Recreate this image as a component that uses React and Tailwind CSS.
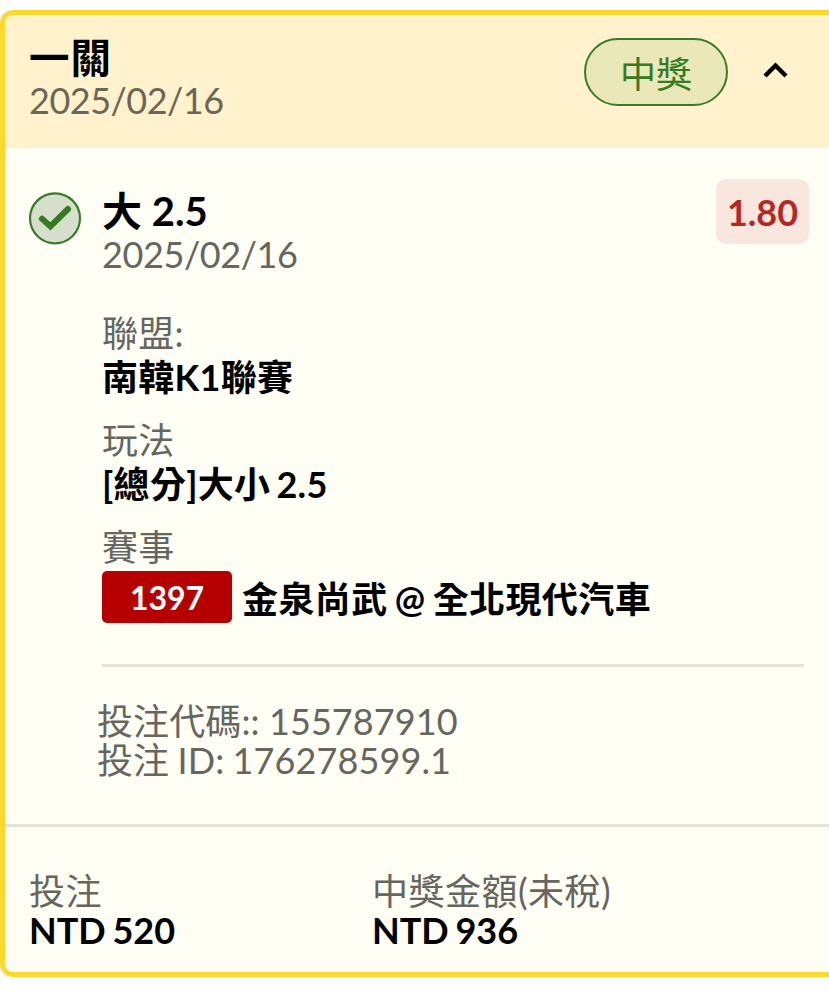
import { useState } from 'react';

const BET = {
  title: '一關',
  date: '2025/02/16',
  status: '中獎',
  code: '155787910',
  id: '176278599.1',
  stake: 'NTD 520',
  payout: 'NTD 936',
};

const LEG = {
  pick: '大 2.5',
  date: '2025/02/16',
  odds: '1.80',
  number: '1397',
  match: '金泉尚武 @ 全北現代汽車',
};

const DETAILS = [
  { label: '聯盟:', value: '南韓K1聯賽' },
  { label: '玩法', value: '[總分]大小 2.5' },
];

const CheckIcon = () => (
  <svg width="54" height="54" viewBox="0 0 54 54" fill="none">
    <circle cx="27" cy="27.3" r="25" fill="#d6dfcc" stroke="#3b7a2b" strokeWidth="2.2" />
    <path d="M14 27.8L22.4 35.4L40 18" stroke="#357a20" strokeWidth="6" strokeLinecap="round" />
  </svg>
);

const ChevronIcon = ({ open }) => (
  <svg width="26" height="18" viewBox="0 0 26 18" fill="none" className={open ? '' : 'rotate-180'}>
    <path d="M2 15L12.5 4.5L23 15" stroke="#000" strokeWidth="4.4" />
  </svg>
);

const Detail = ({ label, value }) => (
  <div className="mb-[19px]">
    <div className="leading-[44px] tracking-[0.3px] text-[#666660]">{label}</div>
    <div className="leading-[44px] font-bold tracking-[0.3px] text-black [word-spacing:-3px]">{value}</div>
  </div>
);

const Amount = ({ label, value }) => (
  <div>
    <div className="tracking-[0.5px] text-[#666660]">{label}</div>
    <div className="font-bold text-black [word-spacing:-2px]">{value}</div>
  </div>
);

export default function App() {
  const [open, setOpen] = useState(true);

  return (
    <div className="min-h-screen overflow-hidden bg-white pt-[10px] font-['Lato','Noto_Sans_CJK_TC',sans-serif] text-[36px] whitespace-nowrap">
      <div className="overflow-hidden rounded-l-[13px] border-y-[5px] border-l-[5px] border-[#fdd82f] bg-[#fffef5]">
        {/* Header */}
        <div className="flex h-[133px] items-start justify-between bg-[#fff2cc] pt-[22px] pr-[40px] pl-[24px]">
          <div className="leading-[42px]">
            <div className="text-[40.5px] font-bold tracking-[1px] text-black">{BET.title}</div>
            <div className="tracking-[-0.5px] text-[#6b6657]">{BET.date}</div>
          </div>
          <div className="mt-[1px] flex items-center gap-[35px]">
            <span className="flex h-[68px] w-[144px] items-center justify-center rounded-full border-2 border-[#3b7a2b] bg-[#eae7b8] pt-[3px] text-[#357a20]">
              {BET.status}
            </span>
            <button className="mb-[4px]" onClick={() => setOpen(!open)}>
              <ChevronIcon open={open} />
            </button>
          </div>
        </div>

        {open && (
          <div className="flex h-[676px] pt-[31px] pr-[20px] pl-[23px]">
            <div className="mt-[12px] mr-[20px] w-[54px] shrink-0">
              <CheckIcon />
            </div>
            <div className="flex-1">
              <div className="flex h-[132px] items-start justify-between">
                <div className="pt-[11px]">
                  <div className="text-[40px] leading-[43px] font-bold text-black">{LEG.pick}</div>
                  <div className="leading-[43px] tracking-[-0.4px] text-[#666660]">{LEG.date}</div>
                </div>
                <span className="flex h-[65px] w-[93px] items-center justify-center rounded-[10px] bg-[#f8e6df] font-bold text-[#b42821]">
                  {LEG.odds}
                </span>
              </div>

              {DETAILS.map((d) => (
                <Detail key={d.label} label={d.label} value={d.value} />
              ))}

              <div className="leading-[44px] tracking-[0.3px] text-[#666660]">賽事</div>
              <div className="mt-[2px] flex h-[52px] items-center gap-[10px]">
                <span className="flex h-[52px] w-[130px] items-center justify-center rounded-[5px] bg-[#b60000] pt-[1px] text-[32px] font-bold text-white">
                  {LEG.number}
                </span>
                <span className="pt-[3px] font-bold tracking-[0.4px] text-black [word-spacing:-2px]">{LEG.match}</span>
              </div>

              <div className="mt-[41px] mr-[5px] h-[3px] bg-[#e6e3de]" />

              {/* Bet code / id */}
              <div className="mt-[35px] -ml-[5px] leading-[39px] text-[#666660]">
                <div className="tracking-[0.1px]">投注代碼:: {BET.code}</div>
                <div className="tracking-[0.1px] [word-spacing:-1px]">投注 ID: {BET.id}</div>
              </div>
            </div>
          </div>
        )}

        {/* Footer */}
        <div className="grid h-[148px] grid-cols-[343px_1fr] border-t-[3px] border-[#e6e3de] pt-[45px] pl-[24px] leading-[38.5px]">
          <Amount label="投注" value={BET.stake} />
          <Amount label="中獎金額(未稅)" value={BET.payout} />
        </div>
      </div>
    </div>
  );
}
